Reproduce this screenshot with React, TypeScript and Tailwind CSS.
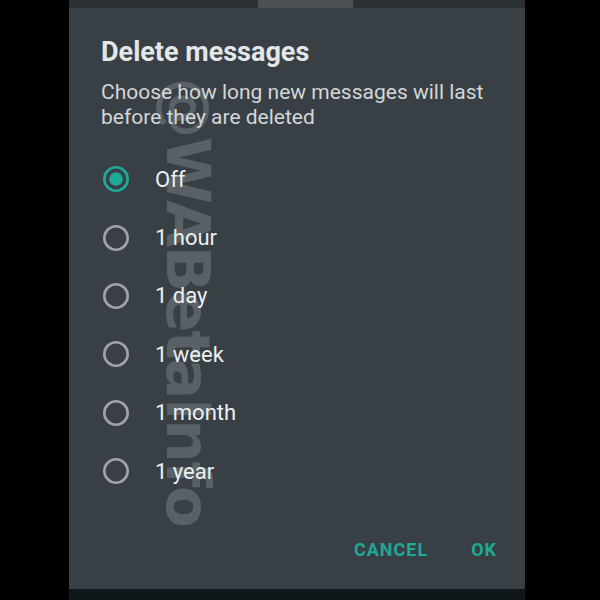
import React from "react";

const options = ["Off", "1 hour", "1 day", "1 week", "1 month", "1 year"];

function Radio({ checked }: { checked: boolean }) {
  return (
    <svg width="28" height="28" viewBox="0 0 28 28" className="shrink-0">
      <circle
        cx="14"
        cy="14"
        r="11.7"
        fill="none"
        stroke={checked ? "#1faa97" : "#9ea3a6"}
        strokeWidth="2.6"
      />
      {checked && <circle cx="14" cy="14" r="6.8" fill="#1faa97" />}
    </svg>
  );
}

export default function App() {
  return (
    <div
      className="w-[600px] h-[600px] bg-black pl-[69px] overflow-hidden"
      style={{ fontFamily: "Roboto, 'Noto Sans', sans-serif" }}
    >
      <div className="relative w-[456px] h-full flex flex-col bg-[#384045]">
        <div className="h-[8px] bg-[#2a3033] flex">
          <div className="ml-[189px] w-[95px] h-full bg-[#4b5053]" />
        </div>

        <div
          className="absolute left-[119px] top-[302px] -translate-x-1/2 -translate-y-1/2 rotate-90 whitespace-nowrap text-[61px] leading-none font-bold tracking-[-1.5px] text-[#596166]"
          style={{ fontFamily: "'DejaVu Sans', sans-serif" }}
        >
          @WABetaInfo
        </div>

        <div className="relative flex-1 flex flex-col pl-[32px] pr-[28px] pt-[28px]">
          <div className="text-[27px] leading-[32px] font-bold text-[#e4e7e8]">
            Delete messages
          </div>
          <div className="mt-[12px] text-[21px] leading-[25px] text-[#d3d6d8]">
            <div>Choose how long new messages will last</div>
            <div>before they are deleted</div>
          </div>

          <div className="mt-[20px] flex flex-col">
            {options.map((o, i) => (
              <div key={o} className="h-[58.4px] flex items-center">
                <div className="ml-[1px]">
                  <Radio checked={i === 0} />
                </div>
                <span className="ml-[25px] text-[22px] text-[#eceeef]">{o}</span>
              </div>
            ))}
          </div>

          <div className="flex-1" />
          <div className="flex justify-end items-center gap-[43px] h-[30px] mb-[25px] text-[18px] font-bold tracking-[1px] text-[#1fa896]">
            <span>CANCEL</span>
            <span>OK</span>
          </div>
        </div>

        <div className="h-[11px] bg-[#10171a]" />
      </div>
    </div>
  );
}
